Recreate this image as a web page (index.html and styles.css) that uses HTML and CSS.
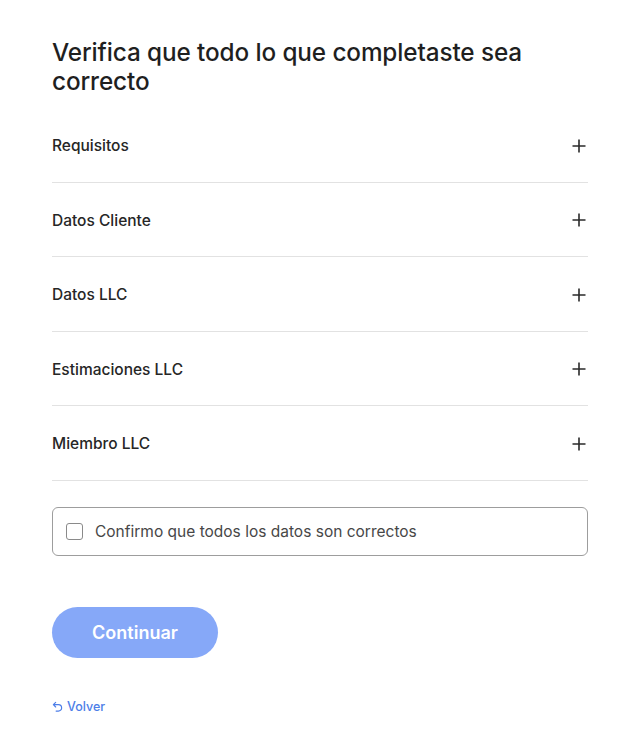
FILE: index.html
```html
<!DOCTYPE html>
<html lang="es">
<head>
<meta charset="utf-8">
<link rel="stylesheet" href="styles.css">
<title>Verifica</title>
</head>
<body>
<main class="page">
  <h1 class="title">Verifica que todo lo que completaste sea correcto</h1>
  <div class="accordion">
    <div class="row"><span class="label">Requisitos</span><svg class="plus" viewBox="0 0 14 14"><path d="M7 0.5V13.5M0.5 7H13.5"/></svg></div>
    <div class="row"><span class="label">Datos Cliente</span><svg class="plus" viewBox="0 0 14 14"><path d="M7 0.5V13.5M0.5 7H13.5"/></svg></div>
    <div class="row"><span class="label">Datos LLC</span><svg class="plus" viewBox="0 0 14 14"><path d="M7 0.5V13.5M0.5 7H13.5"/></svg></div>
    <div class="row"><span class="label">Estimaciones LLC</span><svg class="plus" viewBox="0 0 14 14"><path d="M7 0.5V13.5M0.5 7H13.5"/></svg></div>
    <div class="row"><span class="label">Miembro LLC</span><svg class="plus" viewBox="0 0 14 14"><path d="M7 0.5V13.5M0.5 7H13.5"/></svg></div>
  </div>
  <label class="confirm"><span class="box"></span><span class="confirm-text">Confirmo que todos los datos son correctos</span></label>
  <button class="btn" type="button">Continuar</button>
  <a class="back" href="#"><svg class="back-icon" viewBox="0 0 12 12"><path d="M4 1.5L1.5 4L4 6.5M1.5 4H7A3.5 3.5 0 0 1 7 11H4.5"/></svg>Volver</a>
</main>
</body>
</html>
```
FILE: styles.css
```css
* { box-sizing: border-box; }
html, body { margin: 0; padding: 0; background: #fff; }
body { font-family: "Inter", "Noto Sans", sans-serif; color: #222; }
.page { padding: 38px 52px 0 52px; display: flex; flex-direction: column; align-items: flex-start; }
.title { margin: 0; font-size: 24.3px; line-height: 29px; font-weight: 500; color: #1f1f1f; width: 100%; padding-right: 40px; letter-spacing: -0.1px; }
.accordion { width: 100%; margin-top: 12px; display: flex; flex-direction: column; }
.row { height: 74.5px; border-bottom: 1px solid #e2e2e2; display: flex; align-items: center; justify-content: space-between; padding-top: 2px; }
.label { font-size: 15.5px; font-weight: 500; color: #262626; }
.plus { width: 14px; height: 14px; margin-right: 2px; fill: none; stroke: #2a2a2a; stroke-width: 1.6; }
.confirm { width: 100%; margin-top: 26px; height: 49px; border: 1px solid #9d9d9d; border-radius: 6px; display: flex; align-items: center; padding-left: 13px; gap: 12px; }
.box { width: 17px; height: 17px; border: 1px solid #8a8a8a; border-radius: 3px; background: #fff; }
.confirm-text { font-size: 15.5px; color: #474747; }
.btn { margin-top: 51px; width: 166px; height: 51px; border: none; border-radius: 26px; background: #86a8f8; color: #fff; font-family: inherit; font-size: 18px; font-weight: 600; padding: 0; }
.back { margin-top: 41px; display: flex; align-items: center; gap: 4px; font-size: 12.5px; color: #4d7ee8; text-decoration: none; font-weight: 500; }
.back-icon { width: 11px; height: 11px; fill: none; stroke: #4d7ee8; stroke-width: 1.3; stroke-linecap: round; stroke-linejoin: round; }
```
